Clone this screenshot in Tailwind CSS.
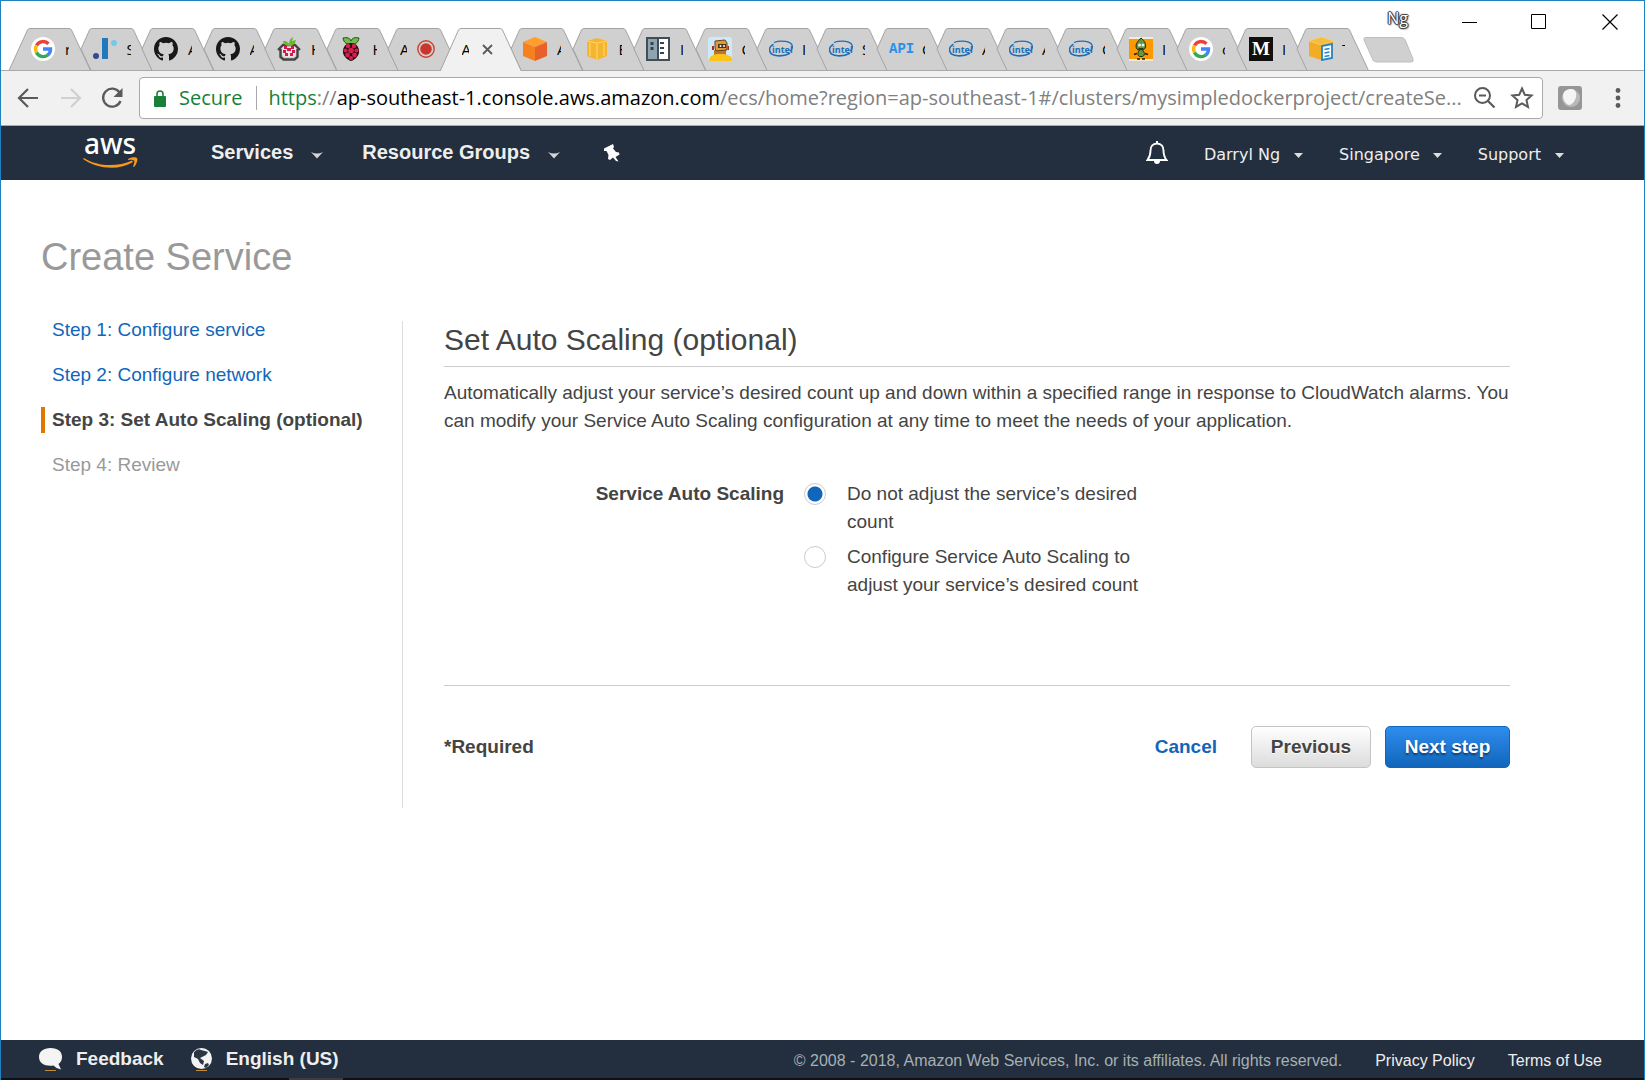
<!DOCTYPE html>
<html lang="en">
<head>
<meta charset="utf-8">
<meta name="viewport" content="width=device-width, initial-scale=1">
<title>Create Service</title>
<script src="https://cdn.jsdelivr.net/npm/@tailwindcss/browser@4"></script>
</head>
<body class="flex min-h-screen flex-col border-x border-t border-[#1e82c0] bg-white font-['Liberation_Sans',Arial,sans-serif] text-[19px] leading-7 text-[#444]">

<!-- Shared symbols -->
<svg class="hidden" aria-hidden="true">
  <symbol id="tab" viewBox="0 0 82 42"><path d="M20 42.5 10 21 18.5 2Q19.3.5 21 .5H60Q61.700 .5 62.500 2L81.500 42.500" fill="#d0d0d0" stroke="#a3a3a3"/></symbol>
  <symbol id="tab-first" viewBox="0 0 82 42"><path d="M0 42.500 18.500 2Q19.300 .5 21 .5H60Q61.700 .5 62.500 2L81.500 42.500" fill="#d0d0d0" stroke="#a3a3a3"/></symbol>
  <symbol id="tab-active" viewBox="0 0 82 43"><path d="M0 43.500 18.500 2Q19.300 .5 21 .5H60Q61.700 .5 62.500 2L81.500 43.500" fill="#f1f1f1" stroke="#a3a3a3"/></symbol>
  <symbol id="google" viewBox="0 0 24 24"><circle cx="12" cy="12" r="12" fill="#fff"/><g fill="none" stroke-width="3.400"><path d="M17.500 6.800A7.500 7.500 0 0 0 5.500 8.500" stroke="#ea4335"/><path d="M5.500 8.500A7.500 7.500 0 0 0 5.500 15.500" stroke="#fbbc05"/><path d="M5.500 15.500A7.500 7.500 0 0 0 16.800 18" stroke="#34a853"/><path d="M16.600 18.100A7.500 7.500 0 0 0 19.500 12H12" stroke="#4285f4"/></g></symbol>
  <symbol id="github" viewBox="0 0 16 16"><path fill="#191717" d="M8 0C3.580 0 0 3.580 0 8c0 3.540 2.290 6.530 5.470 7.590.4.070.55-.17.55-.38 0-.19-.01-.82-.01-1.490-2.010.37-2.530-.49-2.690-.94-.09-.23-.48-.94-.82-1.130-.28-.15-.68-.52-.01-.53.63-.01 1.080.58 1.230.82.72 1.210 1.870.87 2.330.66.07-.52.28-.87.51-1.070-1.780-.2-3.640-.89-3.640-3.950 0-.87.31-1.590.82-2.150-.08-.2-.36-1.020.08-2.120 0 0 .67-.21 2.200.82a7.600 7.600 0 0 1 4 0c1.530-1.040 2.200-.82 2.200-.82.44 1.100.16 1.920.08 2.120.51.56.82 1.270.82 2.150 0 3.070-1.870 3.750-3.650 3.950.29.25.54.73.54 1.480 0 1.070-.01 1.930-.01 2.200 0 .21.15.46.55.38A8.010 8.010 0 0 0 16 8c0-4.420-3.580-8-8-8z"/></symbol>
  <symbol id="intel" viewBox="0 0 24 24"><g fill="none" stroke="#1a6fb8"><path d="M5 5.500C12 2.800 23 4 23.400 9.500c.2 2.500-1.400 4-2.600 4.800" stroke-width="1.200"/><path d="M4.500 7.200C1 9 .2 12 .7 14c1.300 6 13.300 6 20.300 2.200" stroke-width="1.600"/></g><text x="3" y="15.500" font-family="Open Sans" font-size="9" font-weight="700" fill="#1a6fb8">intel</text></symbol>
  <symbol id="caret" viewBox="0 0 12 7"><path d="M0 0Q6 3 12 0L6 6.500Z" fill="#d5d5d5"/></symbol>
  <symbol id="caret-sm" viewBox="0 0 9 5"><path d="M0 0H9L4.500 5Z" fill="#ddd"/></symbol>
</svg>

<header>
  <!-- Tab strip -->
  <div class="flex h-[69px] bg-white pl-2 font-['Open_Sans',sans-serif] text-[15px] text-black">
    <div class="flex w-[738px] shrink-0 items-end" role="tablist">
      <div class="relative flex h-[42px] flex-1 items-center pl-[22px]" role="tab"><svg class="absolute top-0 left-0 h-[42px] w-[82px]"><use href="#tab-first"/></svg><svg class="relative mr-[10px] size-6 shrink-0"><use href="#google"/></svg><span class="relative w-[4px] shrink-0 overflow-hidden">r</span></div>
      <div class="relative flex h-[42px] flex-1 items-center pl-[22px]" role="tab"><svg class="absolute top-0 left-0 h-[42px] w-[82px]"><use href="#tab"/></svg><svg class="relative mr-[10px] size-6 shrink-0" viewBox="0 0 24 24"><circle cx="3" cy="19" r="3" fill="#364a94"/><rect x="9" y="1" width="6" height="21" fill="#2178bd"/><circle cx="21" cy="6" r="3" fill="#75c8e6"/></svg><span class="relative w-[4px] shrink-0 overflow-hidden">S</span></div>
      <div class="relative flex h-[42px] flex-1 items-center pl-[22px]" role="tab"><svg class="absolute top-0 left-0 h-[42px] w-[82px]"><use href="#tab"/></svg><svg class="relative mr-[10px] size-6 shrink-0"><use href="#github"/></svg><span class="relative w-[4px] shrink-0 overflow-hidden">A</span></div>
      <div class="relative flex h-[42px] flex-1 items-center pl-[22px]" role="tab"><svg class="absolute top-0 left-0 h-[42px] w-[82px]"><use href="#tab"/></svg><svg class="relative mr-[10px] size-6 shrink-0"><use href="#github"/></svg><span class="relative w-[4px] shrink-0 overflow-hidden">A</span></div>
      <div class="relative flex h-[42px] flex-1 items-center pl-[22px]" role="tab"><svg class="absolute top-0 left-0 h-[42px] w-[82px]"><use href="#tab"/></svg><svg class="relative mr-[10px] size-6 shrink-0" viewBox="0 0 24 24"><path d="M5 9h14v8l-3 3H8l-3-3z" fill="#e9e3e4"/><path d="M1 13 6 8h12l5 5M3.500 12v8l3 2.500h11l3-2.500v-8" fill="none" stroke="#444" stroke-width="2.400"/><path d="M7 9h3v3H7zM14 9h3v3h-3zM10 11h4v3h-4zM6 13h3v3H6zM15 13h3v3h-3zM8 16h3v3H8zM13 16h3v3h-3z" fill="#d3184f"/><path d="M12 9C8 9 6 6 6 4c3 0 4 0 6 3 0-4 2-6 4-7 0 2-1 3-1 4l4-1c-1 4-3 6-7 6z" fill="#6cb52d"/></svg><span class="relative w-[4px] shrink-0 overflow-hidden">H</span></div>
      <div class="relative flex h-[42px] flex-1 items-center pl-[22px]" role="tab"><svg class="absolute top-0 left-0 h-[42px] w-[82px]"><use href="#tab"/></svg><svg class="relative mr-[10px] size-6 shrink-0" viewBox="0 0 24 24"><path d="M12 7C8 8 5 6 4 1c4-1 7 0 8 3 1-3 4-4 8-3-1 5-4 7-8 6z" fill="#6cc04a" stroke="#234d15"/><path d="M12 6c5 0 7 3 8 7 1 5-4 10-8 11-4-1-9-6-8-11 1-4 3-7 8-7z" fill="#2a0a12"/><g fill="#d3204f"><circle cx="9" cy="9" r="2.300"/><circle cx="15" cy="9" r="2.300"/><circle cx="12" cy="13.500" r="2.800"/><circle cx="6.500" cy="13.500" r="2.100"/><circle cx="17.500" cy="13.500" r="2.100"/><circle cx="8.500" cy="18" r="2.400"/><circle cx="15.500" cy="18" r="2.400"/><circle cx="12" cy="21" r="2"/></g></svg><span class="relative w-[4px] shrink-0 overflow-hidden">H</span></div>
      <div class="relative flex h-[42px] flex-1 items-center pl-[22px]" role="tab"><svg class="absolute top-0 left-0 h-[42px] w-[82px]"><use href="#tab"/></svg><span class="relative mr-[10px] w-[7px] shrink-0 overflow-hidden">A</span><svg class="relative size-[18px] shrink-0" viewBox="0 0 18 18"><circle cx="9" cy="9" r="8.200" fill="none" stroke="#d23f31" stroke-width="1.400"/><circle cx="9" cy="9" r="5.800" fill="#c8372b"/></svg></div>
      <div class="relative z-10 flex h-[42px] flex-1 items-center pl-[22px]" role="tab" aria-selected="true"><svg class="absolute top-0 left-0 h-[43px] w-[82px]"><use href="#tab-active"/></svg><span class="relative mr-[13px] w-[7px] shrink-0 overflow-hidden">A</span><button class="relative" aria-label="Close tab"><svg class="size-[11px]" viewBox="0 0 11 11"><path d="M1 1l9 9M10 1l-9 9" stroke="#5a5a5a" stroke-width="1.800"/></svg></button></div>
      <div class="relative flex h-[42px] flex-1 items-center pl-[22px]" role="tab"><svg class="absolute top-0 left-0 h-[42px] w-[82px]"><use href="#tab"/></svg><svg class="relative mr-[10px] size-6 shrink-0" viewBox="0 0 24 24"><path d="M12 0l12 5-12 5L0 5z" fill="#ff9e2c"/><path d="M0 5l12 5v14L0 19z" fill="#f58220"/><path d="M24 5l-12 5v14l12-5z" fill="#e8602c"/></svg><span class="relative w-[4px] shrink-0 overflow-hidden">A</span></div>
      <div class="relative flex h-[42px] flex-1 items-center pl-[22px]" role="tab"><svg class="absolute top-0 left-0 h-[42px] w-[82px]"><use href="#tab"/></svg><svg class="relative mr-[10px] size-6 shrink-0" viewBox="0 0 24 24"><path d="M2 4l10-3 10 3v15l-10 4L2 19z" fill="#f6b52c"/><path d="M2 4l10 2 10-2M12 6v17M5 6v13M19 6v13" fill="none" stroke="#fbd672" stroke-width="1.200"/></svg><span class="relative w-[3px] shrink-0 overflow-hidden">E</span></div>
      <div class="relative flex h-[42px] flex-1 items-center pl-[22px]" role="tab"><svg class="absolute top-0 left-0 h-[42px] w-[82px]"><use href="#tab"/></svg><svg class="relative mr-[10px] size-6 shrink-0" viewBox="0 0 24 24"><path d="M0 0h24v24H0z" fill="#424e56"/><path d="M2 2h9v20H2z" fill="#8fa4b0"/><path d="M13 2h9v20h-9z" fill="#fff"/><path d="M4.500 5h3v3h-3zM4.500 10h3v3h-3zM14 5h4v2h-4zM14 10h4v2h-4zM14 15h4v2h-4z" fill="#37444d"/></svg><span class="relative w-[3px] shrink-0 overflow-hidden">I</span></div>
      <div class="relative flex h-[42px] flex-1 items-center pl-[22px]" role="tab"><svg class="absolute top-0 left-0 h-[42px] w-[82px]"><use href="#tab"/></svg><svg class="relative mr-[10px] size-6 shrink-0" viewBox="0 0 24 24"><rect width="24" height="24" rx="3" fill="#cdeaf8"/><path d="M6 13h12v6H6z" fill="#b9772b"/><path d="M1 24c0-5 4-7 11-7s12 2 12 5v2z" fill="#fcc419"/><path d="M7 4l10-1 2 3v7l-11 1-1-3z" fill="#dd9a35" stroke="#69401c"/><path d="M10 7h8v4h-8z" fill="#4b3322"/><circle cx="12.500" cy="9" r="1" fill="#fff"/><circle cx="16" cy="9" r="1" fill="#fff"/><path d="M4 9h2v4H4zM19.500 9H21v4h-1.500z" fill="#b3261e"/></svg><span class="relative w-[3px] shrink-0 overflow-hidden">C</span></div>
    </div>
    <div class="flex w-[600px] shrink-0 items-end" role="tablist">
      <div class="relative flex h-[42px] flex-1 items-center pl-[22px]" role="tab"><svg class="absolute top-0 left-0 h-[42px] w-[82px]"><use href="#tab"/></svg><svg class="relative mr-[9px] size-6 shrink-0"><use href="#intel"/></svg><span class="relative w-[3px] shrink-0 overflow-hidden">I</span></div>
      <div class="relative flex h-[42px] flex-1 items-center pl-[22px]" role="tab"><svg class="absolute top-0 left-0 h-[42px] w-[82px]"><use href="#tab"/></svg><svg class="relative mr-[9px] size-6 shrink-0"><use href="#intel"/></svg><span class="relative w-[3px] shrink-0 overflow-hidden">S</span></div>
      <div class="relative flex h-[42px] flex-1 items-center pl-[22px]" role="tab"><svg class="absolute top-0 left-0 h-[42px] w-[82px]"><use href="#tab"/></svg><span class="relative mr-[9px] w-6 shrink-0 text-center font-['Liberation_Mono',monospace] text-sm font-bold text-[#2b8fe8]">API</span><span class="relative w-[3px] shrink-0 overflow-hidden">C</span></div>
      <div class="relative flex h-[42px] flex-1 items-center pl-[22px]" role="tab"><svg class="absolute top-0 left-0 h-[42px] w-[82px]"><use href="#tab"/></svg><svg class="relative mr-[9px] size-6 shrink-0"><use href="#intel"/></svg><span class="relative w-[3px] shrink-0 overflow-hidden">A</span></div>
      <div class="relative flex h-[42px] flex-1 items-center pl-[22px]" role="tab"><svg class="absolute top-0 left-0 h-[42px] w-[82px]"><use href="#tab"/></svg><svg class="relative mr-[9px] size-6 shrink-0"><use href="#intel"/></svg><span class="relative w-[3px] shrink-0 overflow-hidden">A</span></div>
      <div class="relative flex h-[42px] flex-1 items-center pl-[22px]" role="tab"><svg class="absolute top-0 left-0 h-[42px] w-[82px]"><use href="#tab"/></svg><svg class="relative mr-[9px] size-6 shrink-0"><use href="#intel"/></svg><span class="relative w-[3px] shrink-0 overflow-hidden">C</span></div>
      <div class="relative flex h-[42px] flex-1 items-center pl-[22px]" role="tab"><svg class="absolute top-0 left-0 h-[42px] w-[82px]"><use href="#tab"/></svg><svg class="relative mr-[9px] size-6 shrink-0" viewBox="0 0 24 24"><path d="M0 0h24v24H0z" fill="#f4ead8"/><path d="M0 2h24v20H0z" fill="#ff9900"/><path d="M12 1c4 3 5 6 4.500 9-.5 2-2 3-3 3.500 2 1 3 5 0 6h-3c-2-1-2-5 0-6-2-.5-3.500-2-3.500-4.500s2-5 5-8z" fill="#63993d" stroke="#1f2d14"/><circle cx="10.500" cy="8" r="1.500" fill="#eee"/><circle cx="14" cy="8" r="1.500" fill="#eee"/><path d="M9.500 12h5M5 17.500l3-1M16 16.500l3 1M8 22h3M13 22h3" stroke="#1c1c1c" stroke-width="1.600"/></svg><span class="relative w-[3px] shrink-0 overflow-hidden">I</span></div>
      <div class="relative flex h-[42px] flex-1 items-center pl-[22px]" role="tab"><svg class="absolute top-0 left-0 h-[42px] w-[82px]"><use href="#tab"/></svg><svg class="relative mr-[9px] size-6 shrink-0"><use href="#google"/></svg><span class="relative w-[3px] shrink-0 overflow-hidden">c</span></div>
      <div class="relative flex h-[42px] flex-1 items-center pl-[22px]" role="tab"><svg class="absolute top-0 left-0 h-[42px] w-[82px]"><use href="#tab"/></svg><span class="relative mr-[9px] w-6 shrink-0 bg-[#12100e] text-center font-['Liberation_Serif',serif] text-[19px] leading-6 font-bold text-white">M</span><span class="relative w-[3px] shrink-0 overflow-hidden">I</span></div>
      <div class="relative flex h-[42px] flex-1 items-center pl-[22px]" role="tab"><svg class="absolute top-0 left-0 h-[42px] w-[82px]"><use href="#tab"/></svg><svg class="relative mr-[9px] size-6 shrink-0" viewBox="0 0 24 24"><path d="M0 4l12-4 12 4v15l-12 4L0 19z" fill="#f3ac27"/><path d="M0 4l12 4 12-4L12 0z" fill="#f6bc3c" stroke="#fbd683" stroke-width=".6"/><path d="M13 9l10-2v14l-10 2z" fill="#fff" stroke="#2384c6" stroke-width="1.800"/><path d="M15.500 12.500l5-1M15.500 16l5-1M15.500 19.500l5-1" stroke="#2384c6" stroke-width="1.600"/></svg><span class="relative w-[3px] shrink-0 overflow-hidden">T</span></div>
    </div>
    <button class="mt-9 ml-4 h-[26px] w-[52px] shrink-0" aria-label="New tab"><svg class="h-[26px] w-[52px]" viewBox="0 0 52 26"><path d="M3 .5H38Q41 .5 42 2.500L50 22Q51 25 48 25H14Q11 25 10 23L1 3Q0 .5 3 .5Z" fill="#d0d0d0" stroke="#bdbdbd"/></svg></button>
    <div class="-ml-10 flex h-[42px] flex-1 items-center justify-end pr-[26px]">
      <span class="mr-[54px] -mt-2 text-base leading-5 text-white [text-shadow:0_0_1px_#333,1px_0_1px_#333,-1px_0_1px_#333,0_1px_1px_#333,0_-1px_1px_#333,1px_1px_2px_#555]">Ng</span>
      <button class="mr-[53px]" aria-label="Minimize"><svg class="block size-4" viewBox="0 0 16 16"><path d="M0 8.500h15" stroke="#000"/></svg></button>
      <button class="mr-[55px]" aria-label="Maximize"><svg class="block size-4" viewBox="0 0 16 16"><path d="M.5.5h14v14H.5z" fill="none" stroke="#000"/></svg></button>
      <button aria-label="Close"><svg class="block size-4" viewBox="0 0 16 16"><path d="M.5.500l15 15M15.500.500l-15 15" stroke="#000" stroke-width="1.200"/></svg></button>
    </div>
  </div>

  <!-- Address bar -->
  <div class="flex h-14 items-center border-y border-[#a9a9a9] bg-[#f1f1f1] pr-[23px] pl-4 font-['Open_Sans',sans-serif]">
    <button aria-label="Back"><svg class="size-6" viewBox="0 0 24 24"><path d="M21 12H2M11 3l-9 9 9 9" fill="none" stroke="#5a5a5a" stroke-width="2.200"/></svg></button>
    <button class="ml-[18px]" aria-label="Forward"><svg class="size-6" viewBox="0 0 24 24"><path d="M2 12h19M12 3l9 9-9 9" fill="none" stroke="#d0d0d0" stroke-width="2.200"/></svg></button>
    <button class="ml-[17px]" aria-label="Reload"><svg class="size-6" viewBox="0 0 24 24"><path d="M19.500 6.500A9 9 0 1 0 20.500 15" fill="none" stroke="#5a5a5a" stroke-width="2.300"/><path d="M22.500 2v9h-9z" fill="#5a5a5a"/></svg></button>
    <div class="ml-[15px] flex h-[42px] min-w-0 flex-1 items-center rounded-sm border border-[#a9a9a9] bg-white pr-2 pl-[14px] text-[20px]">
      <svg class="h-[17px] w-3 shrink-0" viewBox="0 0 12 17"><path d="M3 7V4a3 3 0 0 1 6 0v3" fill="none" stroke="#188038" stroke-width="1.600"/><rect y="6" width="12" height="11" rx="1" fill="#188038"/></svg>
      <span class="ml-[13px] text-[#188038]">Secure</span>
      <span class="mr-[11px] ml-[14px] h-6 w-px bg-[#a9a9a9]"></span>
      <div class="min-w-0 flex-1 overflow-hidden whitespace-nowrap text-[#808080]" role="textbox" aria-label="Address"><span class="text-[#188038]">https</span>://<span class="text-black">ap-southeast-1.console.aws.amazon.com</span>/ecs/home?region=ap-southeast-1#/clusters/mysimpledockerproject/createSe...</div>
      <button class="shrink-0" aria-label="Zoom"><svg class="block size-6" viewBox="0 0 24 24"><circle cx="9.500" cy="9.500" r="7.500" fill="none" stroke="#5a5a5a" stroke-width="2"/><path d="M6 9.500h7M15 15l6.500 6.500" stroke="#5a5a5a" stroke-width="2.200"/></svg></button>
      <button class="ml-[13px] shrink-0" aria-label="Bookmark"><svg class="block size-6" viewBox="0 0 24 24"><path d="M12 2.500l2.800 6.300 6.800.7-5.100 4.600 1.500 6.800-6-3.500-6 3.500 1.500-6.800-5.100-4.600 6.800-.7z" fill="none" stroke="#5a5a5a" stroke-width="2"/></svg></button>
    </div>
    <button class="ml-[15px]" aria-label="Extension"><svg class="block size-6" viewBox="0 0 24 24"><rect width="24" height="24" rx="3" fill="#969696"/><circle cx="13" cy="12" r="9" fill="#b9b9b9"/><path d="M5 10c0-5 4-7 8-7s6 3 5 8-5 8-7 8-6-4-6-9z" fill="#f5f5f5"/></svg></button>
    <button class="ml-[33px]" aria-label="Menu"><svg class="block h-6 w-[6px]" viewBox="0 0 6 24"><g fill="#5a5a5a"><circle cx="3" cy="4.500" r="2.400"/><circle cx="3" cy="12" r="2.400"/><circle cx="3" cy="19.500" r="2.400"/></g></svg></button>
  </div>

  <!-- Console navigation -->
  <nav class="flex h-[54px] items-center bg-[#232f3e] pr-20 pl-[82px] text-[20px] font-bold text-[#eee]">
    <a href="#" aria-label="AWS home"><svg class="block h-9 w-14" viewBox="0 0 56 36"><text x="1" y="19" font-family="Noto Sans" font-size="28" font-weight="500" fill="#fff">aws</text><path d="M0 24C14 34 36 36 50 27l-1-1.500C35 32 15 32 1 23z" fill="#f7981d"/><path d="M45 24c3-2 8-2 9-1s0 6-3 9l-1-.5c1-3 2-5 1-6s-4-1-6-.5z" fill="#f7981d"/></svg></a>
    <div class="ml-[72px] flex items-center pb-0.5">
      <button class="flex items-center">Services<svg class="mt-1.5 ml-[18px] h-[7px] w-3"><use href="#caret"/></svg></button>
      <button class="ml-[39px] flex items-center">Resource Groups<svg class="mt-1.5 ml-[18px] h-[7px] w-3"><use href="#caret"/></svg></button>
      <button class="ml-11" aria-label="Pin shortcuts"><svg class="mt-0.5 block h-[18px] w-4" viewBox="0 0 16 18"><path d="M0 4.500 9 0l1 3-1 1.500L12 8l3 .5.500 2L11.500 13l3 4.500L12 17l-3-3.500L6 16l-2-1 .5-4L2.500 7 0 7z" fill="#fff"/></svg></button>
    </div>
    <div class="ml-auto flex items-center pt-1 font-['DejaVu_Sans',Verdana,sans-serif] text-base font-normal">
      <button class="-mt-1" aria-label="Notifications"><svg class="block h-6 w-[22px]" viewBox="0 0 22 24"><path d="M11 2.500c-4.500 0-6.500 3.500-6.500 7 0 5-1 7-3 9.500h19c-2-2.500-3-4.500-3-9.500 0-3.500-2-7-6.500-7z" fill="none" stroke="#fff" stroke-width="1.900"/><path d="M10 0h2v3h-2zM8 20h6a3 3 0 0 1-6 0z" fill="#fff"/></svg></button>
      <button class="ml-9 flex items-center">Darryl Ng<svg class="ml-[14px] h-[5px] w-[9px]"><use href="#caret-sm"/></svg></button>
      <button class="ml-9 flex items-center">Singapore<svg class="ml-[13px] h-[5px] w-[9px]"><use href="#caret-sm"/></svg></button>
      <button class="ml-9 flex items-center">Support<svg class="ml-[14px] h-[5px] w-[9px]"><use href="#caret-sm"/></svg></button>
    </div>
  </nav>
</header>

<main class="flex-1 pt-[54px] pr-[134px] pl-10">
  <h1 class="text-[38px] leading-[46px] text-[#999]">Create Service</h1>
  <div class="mt-[41px] flex">
    <ol class="flex w-[362px] shrink-0 flex-col gap-[19px] border-r border-[#ddd] pb-[330px] leading-[26px]">
      <li class="mt-[-4px] pl-[11px]"><a class="text-[#1166bb]" href="#">Step 1: Configure service</a></li>
      <li class="pl-[11px]"><a class="text-[#1166bb]" href="#">Step 2: Configure network</a></li>
      <li class="border-l-4 border-[#e07700] pl-[7px] font-bold" aria-current="step">Step 3: Set Auto Scaling (optional)</li>
      <li class="pl-[11px] text-[#999]">Step 4: Review</li>
    </ol>
    <section class="min-w-0 flex-1 pl-[41px]">
      <h2 class="border-b border-[#ccc] pb-[7px] text-[30px] leading-[38px]">Set Auto Scaling (optional)</h2>
      <p class="mt-3">Automatically adjust your service’s desired count up and down within a specified range in response to CloudWatch alarms. You can modify your Service Auto Scaling configuration at any time to meet the needs of your application.</p>
      <fieldset class="mt-[45px] flex" aria-labelledby="scaling">
        <span id="scaling" class="w-[340px] shrink-0 text-right font-bold">Service Auto Scaling</span>
        <div class="ml-5 flex flex-col gap-[7px]">
          <div class="flex"><input id="fixed" name="scaling" type="radio" checked class="mt-[3px] size-[22px] shrink-0 appearance-none rounded-full border border-[#ccc] bg-white checked:bg-[radial-gradient(circle,#1166bb_7px,white_8px)]"><label for="fixed" class="ml-[21px] max-w-[300px]">Do not adjust the service’s desired count</label></div>
          <div class="flex"><input id="auto" name="scaling" type="radio" class="mt-[3px] size-[22px] shrink-0 appearance-none rounded-full border border-[#ccc] bg-white checked:bg-[radial-gradient(circle,#1166bb_7px,white_8px)]"><label for="auto" class="ml-[21px] max-w-[300px]">Configure Service Auto Scaling to adjust your service’s desired count</label></div>
        </div>
      </fieldset>
      <div class="mt-[86px] flex items-center border-t border-[#ccc] pt-10 font-bold">
        <span class="mr-auto">*Required</span>
        <a class="mr-[34px] text-[#1166bb]" href="#">Cancel</a>
        <button class="mr-[14px] h-[42px] w-[120px] rounded-[5px] border border-[#c4c4c4] bg-linear-to-b from-white to-[#dcdcdc] [text-shadow:0_1px_0_#fff]">Previous</button>
        <button class="h-[42px] w-[125px] rounded-[5px] border border-[#1166bb] bg-linear-to-b from-[#2e8ded] to-[#1166bb] text-white [text-shadow:0_2px_2px_#0a3d70]">Next step</button>
      </div>
    </section>
  </div>
</main>

<footer class="bg-[#232f3e] text-[#eee]">
  <div class="flex h-[38px] items-center pr-[42px] pl-[38px]">
    <svg class="h-[23px] w-6 shrink-0" viewBox="0 0 24 23"><path d="M11.500 0C19 0 23 3.500 23 9c0 3-1 5-3.500 7l2.500 5.500q-5-1-7.500-4C6 18.500 0 15.500 0 9c0-5.500 4.500-9 11.500-9z" fill="#f4f4f4"/><path d="M6 22.500h11" stroke="#c98a2b"/></svg>
    <a class="ml-[13px] font-bold" href="#">Feedback</a>
    <svg class="ml-[26px] h-[23px] w-[23px] shrink-0" viewBox="0 0 23 23"><circle cx="11.500" cy="10.500" r="10.500" fill="#f4f4f4"/><path d="M4 4q4-4 7-2l4 1 3 1-2 3-4 2-2 1 4 3-1 4-3-2-2-4-4-2zM15 16l3-1 1 2-3 3-2-1z" fill="#2b3643"/><path d="M6 22.500h11" stroke="#c98a2b"/></svg>
    <button class="ml-[13px] font-bold">English (US)</button>
    <div class="ml-auto flex items-center pt-1 text-base">
      <span class="text-[#a6b0b5]">© 2008 - 2018, Amazon Web Services, Inc. or its affiliates. All rights reserved.</span>
      <a class="ml-[33px]" href="#">Privacy Policy</a>
      <a class="ml-[33px]" href="#">Terms of Use</a>
    </div>
  </div>
  <div class="h-0.5 bg-[#0c1017] pl-[288px]"><div class="h-0.5 w-[54px] bg-[#3a3d42]"></div></div>
</footer>
</body>
</html>
